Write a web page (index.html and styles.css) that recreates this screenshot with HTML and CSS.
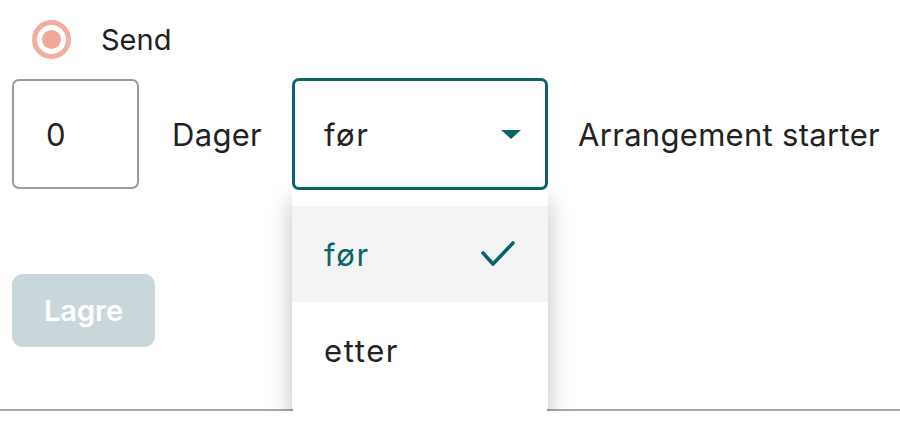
FILE: index.html
```html
<!DOCTYPE html>
<html lang="no">
<head>
  <meta charset="UTF-8" />
  <title>Påminnelse</title>
  <link rel="stylesheet" href="styles.css">
</head>
<body>
  <div class="form">
    <label class="radio-row">
      <span class="radio"><span class="radio-dot"></span></span>
      <span>Send</span>
    </label>

    <div class="when-row">
      <div class="num-input">0</div>
      <span class="label">Dager</span>
      <div class="select-wrap">
        <div class="select">
          <span>før</span>
          <span class="caret"></span>
        </div>
        <ul class="menu">
          <li class="option selected">
            <span>før</span>
            <svg width="36" height="28" viewBox="0 0 36 28">
              <polyline points="3,13 13,24 33,3" fill="none" stroke="#0b6469" stroke-width="3.6" stroke-linecap="round" stroke-linejoin="round" />
            </svg>
          </li>
          <li class="option">etter</li>
        </ul>
      </div>
      <span class="label">Arrangement starter</span>
    </div>

    <button class="save" disabled>Lagre</button>
  </div>
  <hr class="divider">
</body>
</html>
```

FILE: styles.css
```css
body {
  margin: 0;
  background: #fff;
  font-family: Inter, "Noto Sans", sans-serif;
  color: #222;
  font-size: 29px;
}

.form {
  padding: 19px 12px 0;
  height: 390px;
  box-sizing: border-box;
}

.radio-row {
  display: flex;
  align-items: center;
  gap: 30px;
  padding-left: 20px;
  height: 40px;
}

.radio {
  width: 39px;
  height: 39px;
  box-sizing: border-box;
  border: 5px solid #f2ada0;
  border-radius: 50%;
  display: flex;
  align-items: center;
  justify-content: center;
}

.radio-dot {
  width: 19px;
  height: 19px;
  border-radius: 50%;
  background: #f0a898;
}

.when-row {
  display: flex;
  align-items: center;
  gap: 30px;
  margin-top: 19px;
  font-size: 31px;
}

.label {
  letter-spacing: 0.3px;
}

.num-input {
  width: 127px;
  height: 110px;
  box-sizing: border-box;
  border: 2px solid #9c9c9c;
  border-radius: 7px;
  padding-left: 32px;
  display: flex;
  align-items: center;
  margin-right: 3px;
}

.select-wrap {
  position: relative;
}

.select {
  width: 256px;
  height: 112px;
  box-sizing: border-box;
  border: 3px solid #0b6469;
  border-radius: 7px;
  padding: 0 24px 0 29px;
  display: flex;
  align-items: center;
  justify-content: space-between;
  letter-spacing: 1.5px;
}

.caret {
  width: 0;
  height: 0;
  border-left: 10px solid transparent;
  border-right: 10px solid transparent;
  border-top: 9px solid #0b6469;
}

.menu {
  position: absolute;
  top: 112px;
  left: 0;
  width: 256px;
  margin: 0;
  padding: 16px 0;
  list-style: none;
  background: #fff;
  border-radius: 0 0 8px 8px;
  box-shadow: 0 10px 24px rgba(0, 0, 0, 0.25);
  z-index: 5;
}

.option {
  height: 96px;
  padding: 0 32px;
  display: flex;
  align-items: center;
  justify-content: space-between;
  letter-spacing: 1.6px;
}

.option.selected {
  background: #f4f4f4;
  color: #0b6469;
}

.save {
  margin-top: 84px;
  width: 143px;
  height: 73px;
  border: none;
  border-radius: 11px;
  background: #c9d7db;
  color: #fff;
  font-family: inherit;
  font-size: 29px;
  font-weight: 600;
}

.divider {
  margin: 19px 0 0;
  border: none;
  border-top: 2px solid #a8a8a8;
}
```
